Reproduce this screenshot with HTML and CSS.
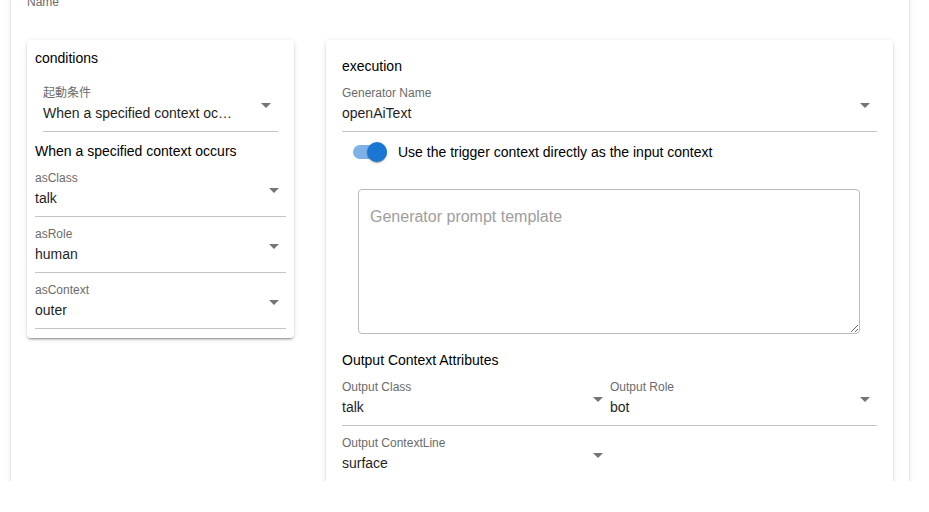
FILE: index.html
```html
<!DOCTYPE html>
<html lang="ja">
<head>
<meta charset="utf-8">
<title>Trigger editor</title>
<link rel="stylesheet" href="styles.css">
</head>
<body>
<div class="viewport">
  <div class="outer-card">
    <div class="name-label">Name</div>
    <div class="card-row">
      <section class="card card-left">
        <div class="card-title">conditions</div>
        <div class="sub-wrap">
          <div class="field">
            <div class="field-body">
              <div class="label">起動条件</div>
              <div class="value value-clip">When a specified context occurs</div>
            </div>
            <svg class="arrow" viewBox="0 0 24 24"><path d="M7 10l5 5 5-5z"/></svg>
          </div>
        </div>
        <div class="subtitle">When a specified context occurs</div>
        <div class="field">
          <div class="field-body">
            <div class="label">asClass</div>
            <div class="value">talk</div>
          </div>
          <svg class="arrow" viewBox="0 0 24 24"><path d="M7 10l5 5 5-5z"/></svg>
        </div>
        <div class="field">
          <div class="field-body">
            <div class="label">asRole</div>
            <div class="value">human</div>
          </div>
          <svg class="arrow" viewBox="0 0 24 24"><path d="M7 10l5 5 5-5z"/></svg>
        </div>
        <div class="field">
          <div class="field-body">
            <div class="label">asContext</div>
            <div class="value">outer</div>
          </div>
          <svg class="arrow" viewBox="0 0 24 24"><path d="M7 10l5 5 5-5z"/></svg>
        </div>
      </section>

      <section class="card card-right">
        <div class="card-title">execution</div>
        <div class="field">
          <div class="field-body">
            <div class="label">Generator Name</div>
            <div class="value">openAiText</div>
          </div>
          <svg class="arrow" viewBox="0 0 24 24"><path d="M7 10l5 5 5-5z"/></svg>
        </div>
        <div class="switch-row">
          <div class="switch">
            <div class="switch-track"></div>
            <div class="switch-knob"></div>
          </div>
          <span class="switch-text">Use the trigger context directly as the input context</span>
        </div>
        <textarea class="prompt" placeholder="Generator prompt template"></textarea>
        <div class="section-title">Output Context Attributes</div>
        <div class="output-grid">
          <div class="field">
            <div class="field-body">
              <div class="label">Output Class</div>
              <div class="value">talk</div>
            </div>
            <svg class="arrow" viewBox="0 0 24 24"><path d="M7 10l5 5 5-5z"/></svg>
          </div>
          <div class="field">
            <div class="field-body">
              <div class="label">Output Role</div>
              <div class="value">bot</div>
            </div>
            <svg class="arrow" viewBox="0 0 24 24"><path d="M7 10l5 5 5-5z"/></svg>
          </div>
          <div class="field">
            <div class="field-body">
              <div class="label">Output ContextLine</div>
              <div class="value">surface</div>
            </div>
            <svg class="arrow" viewBox="0 0 24 24"><path d="M7 10l5 5 5-5z"/></svg>
          </div>
        </div>
      </section>
    </div>
  </div>
</div>
</body>
</html>
```

FILE: styles.css
```css
* { box-sizing: border-box; }

html, body {
  margin: 0;
  padding: 0;
  background: #ffffff;
}

body {
  font-family: "Liberation Sans", Arial, "Noto Sans CJK JP", sans-serif;
  color: #000;
  font-size: 14px;
}

.viewport {
  height: 481px;
  overflow: hidden;
  padding: 0 20px 0 11px;
}

.outer-card {
  margin-top: -6px;
  background: #fff;
  border-radius: 4px;
  padding: 0 16px 16px;
  min-height: 700px;
  box-shadow: 0 3px 1px -2px rgba(0,0,0,.2), 0 2px 2px 0 rgba(0,0,0,.14), 0 1px 5px 0 rgba(0,0,0,.12);
}

.name-label {
  font-size: 12px;
  line-height: 16px;
  color: #6b6b6b;
  margin-bottom: 30px;
}

.card-row {
  display: grid;
  grid-template-columns: 267px 1fr;
  gap: 32px;
  align-items: start;
}

.card {
  background: #fff;
  border-radius: 4px;
  box-shadow: 0 3px 1px -2px rgba(0,0,0,.2), 0 2px 2px 0 rgba(0,0,0,.14), 0 1px 5px 0 rgba(0,0,0,.12);
}

.card-left {
  padding: 8px 8px 9px;
}

.card-right {
  padding: 16px 16px 16px;
  min-height: 600px;
}

.card-title {
  font-size: 14px;
  line-height: 20px;
  color: #000;
}

.sub-wrap {
  padding: 8px;
}

.subtitle {
  margin-top: 1px;
  font-size: 14px;
  line-height: 20px;
  color: #000;
}

.field {
  display: flex;
  align-items: center;
  padding: 9px 0 6px;
  border-bottom: 1px solid #c4c4c4;
  min-width: 0;
}

.field-body {
  flex: 1;
  min-width: 0;
}

.label {
  font-size: 12px;
  line-height: 16px;
  color: #6b6b6b;
  white-space: nowrap;
}

.value {
  font-size: 14px;
  line-height: 24px;
  color: #1f1f1f;
  white-space: nowrap;
  overflow: hidden;
  text-overflow: ellipsis;
}

.value-clip {
  padding-right: 18px;
}

.arrow {
  width: 24px;
  height: 24px;
  flex: none;
  fill: #757575;
}

.switch-row {
  display: flex;
  align-items: center;
  height: 24px;
  margin-top: 8px;
  padding-left: 11px;
}

.switch {
  position: relative;
  width: 34px;
  height: 20px;
  flex: none;
}

.switch-track {
  position: absolute;
  left: 0;
  top: 3px;
  width: 34px;
  height: 14px;
  border-radius: 7px;
  background: #7fb1e8;
}

.switch-knob {
  position: absolute;
  right: 0;
  top: 0;
  width: 20px;
  height: 20px;
  border-radius: 50%;
  background: #1976d2;
  box-shadow: 0 2px 1px -1px rgba(0,0,0,.2), 0 1px 1px 0 rgba(0,0,0,.14), 0 1px 3px 0 rgba(0,0,0,.12);
}

.switch-text {
  margin-left: 11px;
  font-size: 14px;
  color: #000;
  white-space: nowrap;
}

.prompt {
  display: block;
  margin: 25px 17px 0 16px;
  width: calc(100% - 33px);
  height: 145px;
  border: 1px solid #bdbdbd;
  border-radius: 4px;
  padding: 16px 11px;
  font-family: "Liberation Sans", Arial, sans-serif;
  font-size: 16px;
  line-height: 22px;
  color: #1f1f1f;
  background: #fff;
  outline: none;
}

.prompt::placeholder {
  color: #9e9e9e;
}

.section-title {
  margin-top: 16px;
  font-size: 14px;
  line-height: 20px;
  color: #000;
}

.output-grid {
  display: grid;
  grid-template-columns: 268px 1fr;
}
```
